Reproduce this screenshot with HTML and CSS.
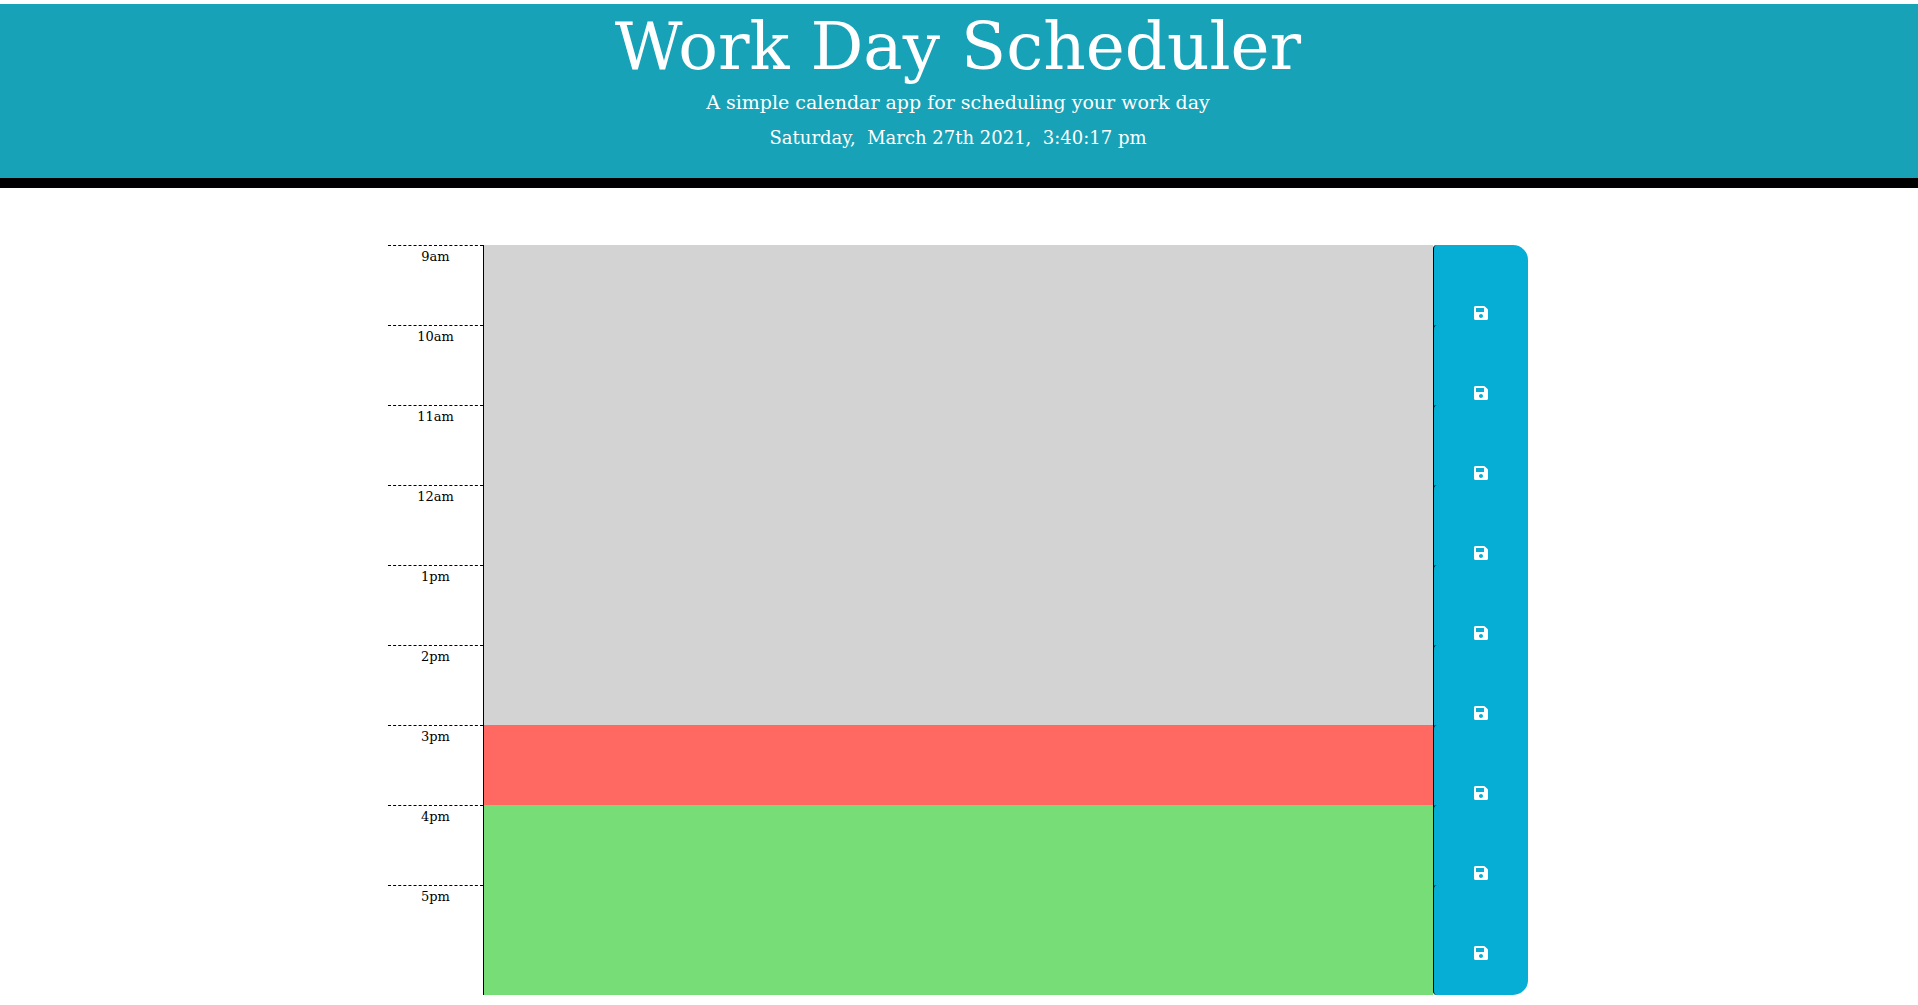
FILE: index.html
```html
<!DOCTYPE html>
<html lang="en">
<head>
<meta charset="utf-8">
<meta name="viewport" content="width=device-width, initial-scale=1">
<title>Work Day Scheduler</title>
<link rel="stylesheet" href="styles.css">
</head>
<body>
<svg class="sprite" aria-hidden="true">
  <symbol id="save" viewBox="0 0 448 512"><path fill="currentColor" d="M433.941 129.941l-83.882-83.882A48 48 0 0 0 316.118 32H48C21.49 32 0 53.49 0 80v352c0 26.51 21.49 48 48 48h352c26.51 0 48-21.49 48-48V163.882a48 48 0 0 0-14.059-33.941zM224 416c-35.346 0-64-28.654-64-64 0-35.346 28.654-64 64-64s64 28.654 64 64c0 35.346-28.654 64-64 64zm96-304.52V212c0 6.627-5.373 12-12 12H76c-6.627 0-12-5.373-12-12V108c0-6.627 5.373-12 12-12h228.52c3.183 0 6.235 1.264 8.485 3.515l3.48 3.48A11.996 11.996 0 0 1 320 111.48z"/></symbol>
</svg>
<header class="banner">
  <h1 class="title">Work Day Scheduler</h1>
  <p class="lead">A simple calendar app for scheduling your work day</p>
  <p class="today">Saturday, &nbsp;March 27th 2021, &nbsp;3:40:17 pm</p>
</header>
<main class="schedule">
  <form class="time-block"><label class="hour" for="h9">9am</label><textarea class="entry past" id="h9"></textarea><button class="save" type="button" aria-label="Save 9am"><svg class="icon"><use href="#save"/></svg></button></form>
  <form class="time-block"><label class="hour" for="h10">10am</label><textarea class="entry past" id="h10"></textarea><button class="save" type="button" aria-label="Save 10am"><svg class="icon"><use href="#save"/></svg></button></form>
  <form class="time-block"><label class="hour" for="h11">11am</label><textarea class="entry past" id="h11"></textarea><button class="save" type="button" aria-label="Save 11am"><svg class="icon"><use href="#save"/></svg></button></form>
  <form class="time-block"><label class="hour" for="h12">12am</label><textarea class="entry past" id="h12"></textarea><button class="save" type="button" aria-label="Save 12am"><svg class="icon"><use href="#save"/></svg></button></form>
  <form class="time-block"><label class="hour" for="h13">1pm</label><textarea class="entry past" id="h13"></textarea><button class="save" type="button" aria-label="Save 1pm"><svg class="icon"><use href="#save"/></svg></button></form>
  <form class="time-block"><label class="hour" for="h14">2pm</label><textarea class="entry past" id="h14"></textarea><button class="save" type="button" aria-label="Save 2pm"><svg class="icon"><use href="#save"/></svg></button></form>
  <form class="time-block"><label class="hour" for="h15">3pm</label><textarea class="entry present" id="h15"></textarea><button class="save" type="button" aria-label="Save 3pm"><svg class="icon"><use href="#save"/></svg></button></form>
  <form class="time-block"><label class="hour" for="h16">4pm</label><textarea class="entry future" id="h16"></textarea><button class="save" type="button" aria-label="Save 4pm"><svg class="icon"><use href="#save"/></svg></button></form>
  <form class="time-block"><label class="hour" for="h17">5pm</label><textarea class="entry future" id="h17"></textarea><button class="save" type="button" aria-label="Save 5pm"><svg class="icon"><use href="#save"/></svg></button></form>
</main>
</body>
</html>
```
FILE: styles.css
```css
* { box-sizing: border-box; }

body {
  margin: 0;
  padding-top: 4px;
  background: #fff;
  color: #000;
  font-family: "DejaVu Serif", serif;
  font-size: 16px;
  line-height: 24px;
}

.sprite { display: none; }

.banner {
  padding: 6px 2px 22px 0;
  border-bottom: 10px solid #000;
  background: #17a2b8;
  color: #fff;
  text-align: center;
}

.title {
  margin: 0;
  font-size: 66px;
  font-weight: 400;
  line-height: 74px;
}

.lead,
.today {
  margin: 0;
  font-size: 19px;
  line-height: 36px;
}

.today { font-size: 18px; }

.schedule {
  padding: 57px 2px 0 0;
}

.time-block {
  display: grid;
  grid-template-columns: 1fr 10fr 1fr;
  max-width: 1140px;
  height: 80px;
  margin: 0 auto;
}

/* The entry and its button run on under the next block; only the last shows in full. */
.time-block:last-child { height: 110px; }

.hour {
  height: 80px;
  border-top: 1px dashed #000;
  font-size: 13px;
  line-height: 22px;
  text-align: center;
}

.entry {
  width: 100%;
  height: 110px;
  margin: 0;
  padding: 8px;
  border: 0;
  border-left: 1px solid #000;
  font: inherit;
  resize: none;
}

.past { background: #d3d3d3; }
.present { background: #ff6961; }
.future { background: #77dd77; }

.save {
  height: 110px;
  padding: 26px 0 0;
  border: 0;
  border-left: 1px solid #000;
  border-radius: 4px 15px 15px 4px;
  background: #06aed5;
  color: #fff;
}

.icon {
  display: block;
  width: 14px;
  height: 16px;
  margin: 0 auto;
}
```
